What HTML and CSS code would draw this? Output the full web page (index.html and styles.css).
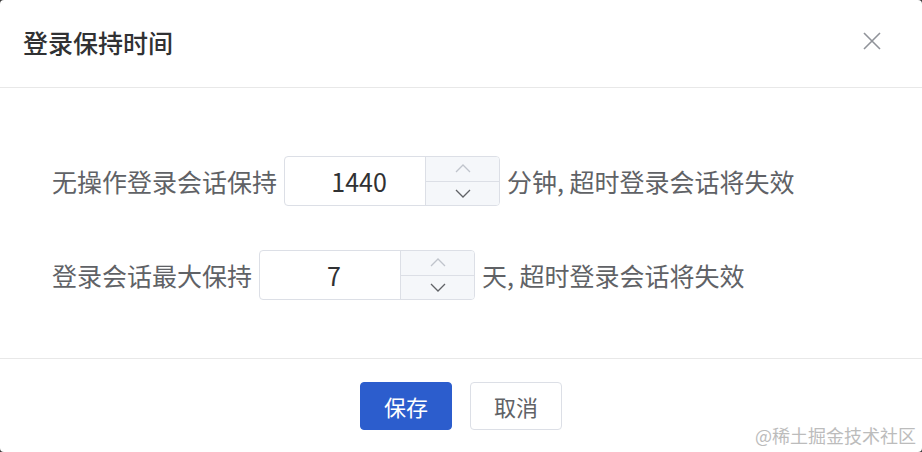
FILE: index.html
```html
<!DOCTYPE html>
<html lang="zh-CN">
<head>
  <meta charset="UTF-8">
  <title>登录保持时间</title>
  <link rel="stylesheet" href="styles.css">
</head>
<body>
  <div class="dialog">
    <div class="dialog-header">
      <span class="dialog-title">登录保持时间</span>
      <button class="close-btn" aria-label="关闭">
        <svg width="18" height="18" viewBox="0 0 18 18">
          <path d="M1 1 L17 17 M17 1 L1 17" stroke="#909399" stroke-width="1.6" fill="none"/>
        </svg>
      </button>
    </div>

    <div class="dialog-body">
      <div class="form-row">
        <span class="label">无操作登录会话保持</span>
        <div class="number-input">
          <input type="text" value="1440">
          <div class="stepper">
            <span class="step up">
              <svg width="16" height="9" viewBox="0 0 16 9"><path d="M1 8 L8 1 L15 8" stroke="#c0c4cc" stroke-width="1.3" fill="none"/></svg>
            </span>
            <span class="step down">
              <svg width="16" height="9" viewBox="0 0 16 9"><path d="M1 1 L8 8 L15 1" stroke="#606266" stroke-width="1.3" fill="none"/></svg>
            </span>
          </div>
        </div>
        <span class="label">分钟, 超时登录会话将失效</span>
      </div>

      <div class="form-row">
        <span class="label">登录会话最大保持</span>
        <div class="number-input">
          <input type="text" value="7">
          <div class="stepper">
            <span class="step up">
              <svg width="16" height="9" viewBox="0 0 16 9"><path d="M1 8 L8 1 L15 8" stroke="#c0c4cc" stroke-width="1.3" fill="none"/></svg>
            </span>
            <span class="step down">
              <svg width="16" height="9" viewBox="0 0 16 9"><path d="M1 1 L8 8 L15 1" stroke="#606266" stroke-width="1.3" fill="none"/></svg>
            </span>
          </div>
        </div>
        <span class="label">天, 超时登录会话将失效</span>
      </div>
    </div>

    <div class="dialog-footer">
      <button class="btn btn-primary">保存</button>
      <button class="btn">取消</button>
    </div>

    <span class="watermark">@稀土掘金技术社区</span>
  </div>
</body>
</html>
```

FILE: styles.css
```css
html, body {
  height: 100%;
}
body {
  margin: 0;
  background-color: #3a3a3a;
  font-family: "Noto Sans CJK SC", "Noto Sans", sans-serif;
  color: #606266;
}
.dialog {
  position: relative;
  box-sizing: border-box;
  width: 922px;
  height: 452px;
  background-color: #fff;
  border-radius: 4px;
  overflow: hidden;
}
.dialog-header {
  height: 87px;
  border-bottom: 1px solid #e8e8e8;
  display: flex;
  align-items: center;
  justify-content: space-between;
  padding: 0 41px 0 23px;
}
.dialog-title {
  font-size: 25px;
  font-weight: 500;
  color: #303133;
  line-height: 1;
  margin-top: -2px;
}
.close-btn {
  border: none;
  background: none;
  padding: 0;
  display: flex;
  margin-top: -6px;
  cursor: pointer;
}
.dialog-body {
  padding: 68px 52px 58px;
  display: flex;
  flex-direction: column;
  gap: 44px;
  border-bottom: 1px solid #e8e8e8;
}
.form-row {
  display: flex;
  align-items: center;
  height: 50px;
}
.label {
  font-size: 25px;
  line-height: 1;
  color: #606266;
}
.number-input {
  position: relative;
  box-sizing: border-box;
  width: 216px;
  height: 50px;
  margin: 0 7px;
  border: 1px solid #dcdfe6;
  border-radius: 4px;
  display: flex;
}
.number-input input {
  flex: 1;
  min-width: 0;
  border: none;
  outline: none;
  background: transparent;
  text-align: center;
  font-family: inherit;
  font-size: 25px;
  color: #303133;
  padding: 0 0 0 8px;
}
.stepper {
  width: 73px;
  display: flex;
  flex-direction: column;
  border-left: 1px solid #dcdfe6;
  background-color: #f5f7fa;
  border-radius: 0 3px 3px 0;
}
.step {
  flex: 1;
  display: flex;
  align-items: center;
  justify-content: center;
}
.step.up {
  border-bottom: 1px solid #dcdfe6;
}
.dialog-footer {
  display: flex;
  justify-content: center;
  gap: 18px;
  padding-top: 23px;
}
.btn {
  width: 92px;
  height: 48px;
  border: 1px solid #dcdfe6;
  border-radius: 4px;
  background-color: #fff;
  color: #606266;
  font-family: inherit;
  font-size: 22px;
  cursor: pointer;
}
.btn-primary {
  background-color: #2c5dcd;
  border-color: #2c5dcd;
  color: #fff;
}
.watermark {
  position: absolute;
  right: 6px;
  bottom: 5px;
  font-size: 18px;
  color: #bcbcbc;
  line-height: 1.2;
}
```
